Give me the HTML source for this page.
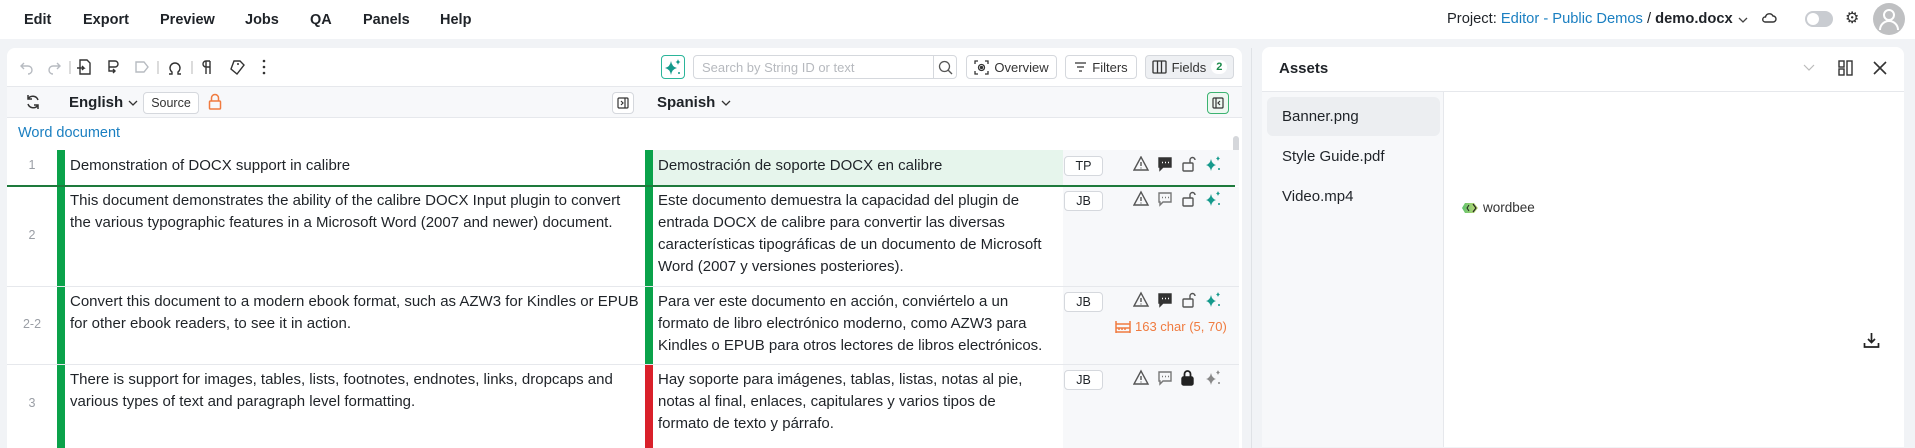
<!DOCTYPE html>
<html><head><meta charset="utf-8">
<style>
*{box-sizing:border-box;margin:0;padding:0}
body{width:1915px;height:444px;overflow:hidden;background:#f1f3f6;font-family:"Liberation Sans",Arial,sans-serif;color:#1f2328;position:relative}
.a{position:absolute}
.menu{top:0;left:0;width:1915px;height:39px;background:#fff}
.menu span{position:absolute;top:12px;font-size:14.5px;font-weight:600;color:#1f2328}
.panel{left:7px;top:48px;width:1235px;height:400px;background:#fff;border-radius:8px 8px 0 0;overflow:hidden}
.ic{position:absolute}
.btn{position:absolute;border:1px solid #d5d8dd;border-radius:4px;background:#fff;font-size:13px;color:#333;display:flex;align-items:center;justify-content:center;gap:5px}
.txt{position:absolute;font-size:15px;line-height:22px;white-space:nowrap;color:#1f2328}
.num{position:absolute;font-size:12.5px;color:#9a9ea5;text-align:center;width:50px;left:0}
.bar{position:absolute;width:8px}
.badge{position:absolute;left:1064px;width:39px;height:20px;border:1px solid #d5d8dd;border-radius:4px;font-size:12.5px;display:flex;align-items:center;justify-content:center;background:#fff}
.meta{position:absolute;left:1056px;width:176px;background:#f7f8fa}
.sep{position:absolute;left:0;width:1232px;height:1px;background:#e6e8ec}
</style></head><body>
<div class="a menu">
<span style="left:24px">Edit</span><span style="left:83px">Export</span><span style="left:160px">Preview</span><span style="left:245px">Jobs</span><span style="left:310px">QA</span><span style="left:363px">Panels</span><span style="left:440px">Help</span>
<div class="a" style="left:1447px;top:11px;font-size:14.7px;white-space:nowrap">Project: <span style="position:static;color:#1a7fc1;font-weight:400;font-size:14.7px">Editor - Public Demos</span> / <b>demo.docx</b></div>
<svg class="ic" style="left:1737px;top:15px" width="12" height="10" viewBox="0 0 12 10"><path d="M2 3l4 4 4-4" stroke="#444" fill="none" stroke-width="1.3"/></svg>
<svg class="ic" style="left:1761px;top:11px" width="16" height="14" viewBox="0 0 16 14"><path d="M4 11h8a3 3 0 0 0 0-6 4 4 0 0 0-7.5 1A2.5 2.5 0 0 0 4 11z" stroke="#333" fill="none" stroke-width="1.4"/></svg>
<div class="a" style="left:1805px;top:11px;width:28px;height:16px;border-radius:8px;background:#c9ccd1"><div class="a" style="left:2px;top:2px;width:12px;height:12px;border-radius:6px;background:#fff"></div></div>
<div class="a" style="left:1845px;top:8px;font-size:16px;color:#333">⚙</div>
<div class="a" style="left:1873px;top:3px;width:32px;height:32px;border-radius:16px;background:#bfc0c2"><svg width="32" height="32" viewBox="0 0 32 32"><circle cx="16" cy="12" r="5" stroke="#fff" stroke-width="2" fill="none"/><path d="M7 27a9 9 0 0 1 18 0" stroke="#fff" stroke-width="2" fill="none"/></svg></div>
</div>

<div class="a panel">
<svg class="ic" style="left:12px;top:10px" width="270" height="18" viewBox="0 0 270 18" fill="none" stroke-width="1.4">
<path d="M5 5l-3 3 3 3M2 8h7a4 4 0 0 1 0 8" stroke="#b7bbc1"/>
<path d="M38 5l3 3-3 3M41 8h-7a4 4 0 0 0 0 8" stroke="#b7bbc1"/>
<path d="M51 3v13" stroke="#ccc"/>
<path d="M61 2h7l3 3v11H61zM58 10h7l-2-2m2 2l-2 2" stroke="#333"/>
<path d="M90 3h6a3 3 0 0 1 0 6h-6zM90 9v4h6m-2-2l2 2-2 2" stroke="#333"/>
<path d="M117 4h8l4 5-4 5h-8z" stroke="#b7bbc1"/>
<path d="M139 3v13" stroke="#ccc"/>
<path d="M150 16h3v-2a5 5 0 1 1 6 0v2h3" stroke="#333"/>
<path d="M173 3v13" stroke="#ccc"/>
<path d="M187 3v13M191 3v13M191 3h-4a3 3 0 0 0 0 6h4" stroke="#333"/>
<path d="M215 3h6l4 4-7 9-6-5z" stroke="#333"/><circle cx="219" cy="6" r="1" fill="#333"/>
<circle cx="245" cy="3" r="1.3" fill="#333"/><circle cx="245" cy="9" r="1.3" fill="#333"/><circle cx="245" cy="15" r="1.3" fill="#333"/>
</svg>
<div class="a" style="left:654px;top:7px;width:24px;height:24px;border:1px solid #2bb59a;border-radius:4px"><svg width="22" height="22" viewBox="0 0 22 22"><path d="M9 5q1 6 6 7-5 1-6 7-1-6-6-7 5-1 6-7z" fill="#159a8c"/><path d="M16 3q.5 2.5 2.5 3-2 .5-2.5 3-.5-2.5-2.5-3 2-.5 2.5-3z" fill="#159a8c"/><circle cx="17" cy="17" r="1" fill="#159a8c"/></svg></div>
<div class="a" style="left:686px;top:7px;width:264px;height:24px;border:1px solid #d5d8dd;border-radius:4px;font-size:13px;color:#b6b9be;padding:4px 8px">Search by String ID or text</div>
<div class="a" style="left:926px;top:7px;width:1px;height:24px;background:#d5d8dd"></div>
<svg class="ic" style="left:931px;top:12px" width="15" height="15" viewBox="0 0 15 15"><circle cx="6.5" cy="6.5" r="5" stroke="#555" fill="none" stroke-width="1.3"/><path d="M10 10l4 4" stroke="#555" stroke-width="1.3"/></svg>
<div class="btn" style="left:959px;top:7px;width:91px;height:24px"><svg width="15" height="15" viewBox="0 0 15 15" fill="none" stroke="#333" stroke-width="1.3"><path d="M1 4V1h3M11 1h3v3M14 11v3h-3M4 14H1v-3"/><circle cx="7.5" cy="7.5" r="3"/><circle cx="7.5" cy="7.5" r="1" fill="#333"/></svg>Overview</div>
<div class="btn" style="left:1058px;top:7px;width:72px;height:24px"><svg width="13" height="12" viewBox="0 0 13 12" stroke="#333" stroke-width="1.3"><path d="M1 2h11M3 6h7M5 10h3"/></svg>Filters</div>
<div class="btn" style="left:1138px;top:7px;width:89px;height:24px;background:#eef0f3"><svg width="15" height="14" viewBox="0 0 15 14" fill="none" stroke="#333" stroke-width="1.3"><rect x="1" y="1" width="13" height="12" rx="1"/><path d="M5.5 1v12M9.5 1v12"/></svg>Fields <span style="background:#fff;border-radius:8px;padding:1px 5px;font-size:11px;color:#1b8a4a;font-weight:600">2</span></div>

<div class="a" style="left:0;top:38px;width:1235px;height:32px;background:#f7f8fa;border-top:1px solid #e6e8ec;border-bottom:1px solid #e6e8ec"></div>
<svg class="ic" style="left:18px;top:46px" width="16" height="16" viewBox="0 0 16 16" fill="none" stroke="#333" stroke-width="1.5"><path d="M13 6a5.5 5.5 0 0 0-10-1M3 10a5.5 5.5 0 0 0 10 1M3 1v4h4M13 15v-4H9"/></svg>
<div class="a" style="left:62px;top:46px;font-size:15px;font-weight:700">English</div>
<svg class="ic" style="left:121px;top:51px" width="10" height="8" viewBox="0 0 10 8"><path d="M1 2l4 4 4-4" stroke="#333" fill="none" stroke-width="1.3"/></svg>
<div class="btn" style="left:136px;top:44px;width:56px;height:22px;font-size:12.5px">Source</div>
<svg class="ic" style="left:201px;top:45px" width="14" height="18" viewBox="0 0 14 18" fill="none" stroke="#f07b3f" stroke-width="1.5"><path d="M3.5 8V5a3.5 3.5 0 0 1 7 0v3"/><rect x="1.5" y="8" width="11" height="8" rx="1"/></svg>
<div class="btn" style="left:605px;top:44px;width:22px;height:22px"><svg width="12" height="12" viewBox="0 0 12 12" fill="none" stroke="#333" stroke-width="1.2"><rect x="1" y="1" width="10" height="10" rx="1"/><path d="M8 1v10M4 4l2 2-2 2"/></svg></div>
<div class="a" style="left:650px;top:46px;font-size:15px;font-weight:700">Spanish</div>
<svg class="ic" style="left:714px;top:51px" width="10" height="8" viewBox="0 0 10 8"><path d="M1 2l4 4 4-4" stroke="#333" fill="none" stroke-width="1.3"/></svg>
<div class="btn" style="left:1200px;top:44px;width:22px;height:22px;border-color:#3cb371;background:#eef8f1"><svg width="12" height="12" viewBox="0 0 12 12" fill="none" stroke="#333" stroke-width="1.2"><rect x="1" y="1" width="10" height="10" rx="1"/><path d="M4 1v10M8 4L6 6l2 2"/></svg></div>

<div class="a" style="left:11px;top:77px;font-size:14.5px;color:#1a7fc1">Word document</div>
<div class="a" style="left:1226px;top:88px;width:6px;height:36px;border-radius:3px;background:#d5d7db"></div>

<div class="num" style="top:110px">1</div>
<div class="bar" style="left:50px;top:102px;height:36px;background:#0aa24a"></div>
<div class="txt" style="left:63px;top:107px">Demonstration of DOCX support in calibre</div>
<div class="bar" style="left:638px;top:102px;height:36px;background:#0aa24a"></div>
<div class="a" style="left:646px;top:102px;width:410px;height:35px;background:#e6f5ec"></div>
<div class="txt" style="left:651px;top:107px">Demostración de soporte DOCX en calibre</div>
<div class="meta" style="top:102px;height:36px"></div>
<div class="badge" style="top:108px;left:1057px">TP</div>
<div class="a" style="left:0;top:137px;width:1228px;height:2px;background:#1e7a3c"></div>

<div class="num" style="top:180px">2</div>
<div class="bar" style="left:50px;top:139px;height:99px;background:#0aa24a"></div>
<div class="txt" style="left:63px;top:142px">This document demonstrates the ability of the calibre DOCX Input plugin to convert<br>the various typographic features in a Microsoft Word (2007 and newer) document.</div>
<div class="bar" style="left:638px;top:139px;height:99px;background:#0aa24a"></div>
<div class="txt" style="left:651px;top:142px">Este documento demuestra la capacidad del plugin de<br>entrada DOCX de calibre para convertir las diversas<br>características tipográficas de un documento de Microsoft<br>Word (2007 y versiones posteriores).</div>
<div class="meta" style="top:139px;height:99px"></div>
<div class="badge" style="top:143px;left:1057px">JB</div>
<div class="sep" style="top:238px"></div>

<div class="num" style="top:269px">2-2</div>
<div class="bar" style="left:50px;top:239px;height:77px;background:#0aa24a"></div>
<div class="txt" style="left:63px;top:243px">Convert this document to a modern ebook format, such as AZW3 for Kindles or EPUB<br>for other ebook readers, to see it in action.</div>
<div class="bar" style="left:638px;top:239px;height:77px;background:#0aa24a"></div>
<div class="txt" style="left:651px;top:243px">Para ver este documento en acción, conviértelo a un<br>formato de libro electrónico moderno, como AZW3 para<br>Kindles o EPUB para otros lectores de libros electrónicos.</div>
<div class="meta" style="top:239px;height:77px"></div>
<div class="badge" style="top:244px;left:1057px">JB</div>
<svg class="ic" style="left:1108px;top:272px" width="16" height="14" viewBox="0 0 16 14" fill="none" stroke="#f07b3f" stroke-width="1.5"><path d="M1 1v12M15 1v12M1 4h14M1 8h14v4H1z"/><path d="M4 8v2M7 8v2M10 8v2" /></svg>
<div class="a" style="left:1128px;top:271px;font-size:13px;color:#f07b3f;white-space:nowrap">163 char (5, 70)</div>
<div class="sep" style="top:316px"></div>

<div class="num" style="top:348px">3</div>
<div class="bar" style="left:50px;top:317px;height:100px;background:#0aa24a"></div>
<div class="txt" style="left:63px;top:321px">There is support for images, tables, lists, footnotes, endnotes, links, dropcaps and<br>various types of text and paragraph level formatting.</div>
<div class="bar" style="left:638px;top:317px;height:100px;background:#d9202a"></div>
<div class="txt" style="left:651px;top:321px">Hay soporte para imágenes, tablas, listas, notas al pie,<br>notas al final, enlaces, capitulares y varios tipos de<br>formato de texto y párrafo.</div>
<div class="meta" style="top:317px;height:100px"></div>
<div class="badge" style="top:322px;left:1057px">JB</div>

<svg class="ic" style="left:1126px;top:108px" width="96" height="240" viewBox="0 0 96 240" fill="none" stroke-width="1.4">
<g>
<path d="M8 1L1 14h14z M8 6v4" stroke="#555"/><circle cx="8" cy="12" r=".6" fill="#555"/>
<path d="M26 2h12v9h-8l-3 3v-3h-1z" fill="#333" stroke="#333"/><path d="M29 6.5h1M32 6.5h1M35 6.5h1" stroke="#fff"/>
<rect x="50" y="7" width="10" height="8" rx="1" stroke="#555"/><path d="M57 7V4a2.5 2.5 0 0 1 5 0" stroke="#555"/>
<path d="M78 3q1 5 5 6-4 1-5 6-1-5-5-6 4-1 5-6z" fill="#159a8c"/><path d="M85 0q.5 2 2 2.5-1.5.5-2 2.5-.5-2-2-2.5 1.5-.5 2-2.5z" fill="#159a8c"/><circle cx="86" cy="13" r="1" fill="#159a8c"/>
</g>
<g transform="translate(0,35)">
<path d="M8 1L1 14h14z M8 6v4" stroke="#555"/><circle cx="8" cy="12" r=".6" fill="#555"/>
<path d="M26 2h12v9h-8l-3 3v-3h-1z" stroke="#777"/><path d="M29 6.5h1M32 6.5h1M35 6.5h1" stroke="#777"/>
<rect x="50" y="7" width="10" height="8" rx="1" stroke="#555"/><path d="M57 7V4a2.5 2.5 0 0 1 5 0" stroke="#555"/>
<path d="M78 3q1 5 5 6-4 1-5 6-1-5-5-6 4-1 5-6z" fill="#159a8c"/><path d="M85 0q.5 2 2 2.5-1.5.5-2 2.5-.5-2-2-2.5 1.5-.5 2-2.5z" fill="#159a8c"/><circle cx="86" cy="13" r="1" fill="#159a8c"/>
</g>
<g transform="translate(0,136)">
<path d="M8 1L1 14h14z M8 6v4" stroke="#555"/><circle cx="8" cy="12" r=".6" fill="#555"/>
<path d="M26 2h12v9h-8l-3 3v-3h-1z" fill="#333" stroke="#333"/><path d="M29 6.5h1M32 6.5h1M35 6.5h1" stroke="#fff"/>
<rect x="50" y="7" width="10" height="8" rx="1" stroke="#555"/><path d="M57 7V4a2.5 2.5 0 0 1 5 0" stroke="#555"/>
<path d="M78 3q1 5 5 6-4 1-5 6-1-5-5-6 4-1 5-6z" fill="#159a8c"/><path d="M85 0q.5 2 2 2.5-1.5.5-2 2.5-.5-2-2-2.5 1.5-.5 2-2.5z" fill="#159a8c"/><circle cx="86" cy="13" r="1" fill="#159a8c"/>
</g>
<g transform="translate(0,214)">
<path d="M8 1L1 14h14z M8 6v4" stroke="#555"/><circle cx="8" cy="12" r=".6" fill="#555"/>
<path d="M26 2h12v9h-8l-3 3v-3h-1z" stroke="#777"/><path d="M29 6.5h1M32 6.5h1M35 6.5h1" stroke="#777"/>
<rect x="49" y="7" width="11" height="8" rx="1.5" fill="#222" stroke="#222"/><path d="M51.5 7V4a3 3 0 0 1 6 0v3" stroke="#222" stroke-width="1.8"/>
<path d="M78 3q1 5 5 6-4 1-5 6-1-5-5-6 4-1 5-6z" fill="#888"/><path d="M85 0q.5 2 2 2.5-1.5.5-2 2.5-.5-2-2-2.5 1.5-.5 2-2.5z" fill="#888"/><circle cx="86" cy="13" r="1" fill="#888"/>
</g>
</svg>
</div>
<div class="a" style="left:1251px;top:48px;width:1px;height:400px;background:#dfe2e6"></div>

<div class="a" style="left:1262px;top:47px;width:642px;height:400px;background:#fff;border-radius:8px 8px 0 0;overflow:hidden">
<div class="a" style="left:17px;top:13px;font-size:15px;font-weight:700">Assets</div>
<svg class="ic" style="left:541px;top:17px" width="12" height="8" viewBox="0 0 12 8"><path d="M1 1l5 5 5-5" stroke="#bbb" fill="none" stroke-width="1.2"/></svg>
<svg class="ic" style="left:576px;top:13px" width="15" height="16" viewBox="0 0 15 16" fill="none" stroke="#333" stroke-width="1.4"><rect x="1" y="1" width="5" height="6"/><rect x="1" y="9" width="5" height="6"/><rect x="9" y="1" width="5" height="14"/></svg>
<svg class="ic" style="left:611px;top:14px" width="14" height="14" viewBox="0 0 14 14" stroke="#333" stroke-width="1.6"><path d="M1 1l12 12M13 1L1 13"/></svg>
<div class="a" style="left:0;top:44px;width:642px;height:1px;background:#e6e8ec"></div>
<div class="a" style="left:0;top:45px;width:182px;height:360px;background:#f7f8fa;border-right:1px solid #e6e8ec"></div>
<div class="a" style="left:5px;top:50px;width:173px;height:39px;background:#eceef1;border-radius:6px"></div>
<div class="a" style="left:20px;top:61px;font-size:15px">Banner.png</div>
<div class="a" style="left:20px;top:101px;font-size:15px">Style Guide.pdf</div>
<div class="a" style="left:20px;top:141px;font-size:15px">Video.mp4</div>
<svg class="ic" style="left:199px;top:155px" width="20" height="12" viewBox="0 0 20 12"><defs><linearGradient id="g" x1="0" x2="1"><stop offset="0" stop-color="#5cc16b"/><stop offset="1" stop-color="#c9dc7a"/></linearGradient></defs><path d="M4 1h9l4 5-4 5H4L1 6z" fill="url(#g)"/><path d="M12 2l3 4-3 4" stroke="#222" fill="none" stroke-width="1.2"/><path d="M8 3L6 6l2 3" stroke="#222" fill="none" stroke-width="1"/></svg>
<div class="a" style="left:221px;top:153px;font-size:13.5px;color:#333">wordbee</div>
<svg class="ic" style="left:601px;top:285px" width="17" height="17" viewBox="0 0 17 17" fill="none" stroke="#222" stroke-width="1.7"><path d="M8.5 1v9M5 7l3.5 3.5L12 7M1.5 11v4h14v-4"/></svg>
</div>
</body></html>
